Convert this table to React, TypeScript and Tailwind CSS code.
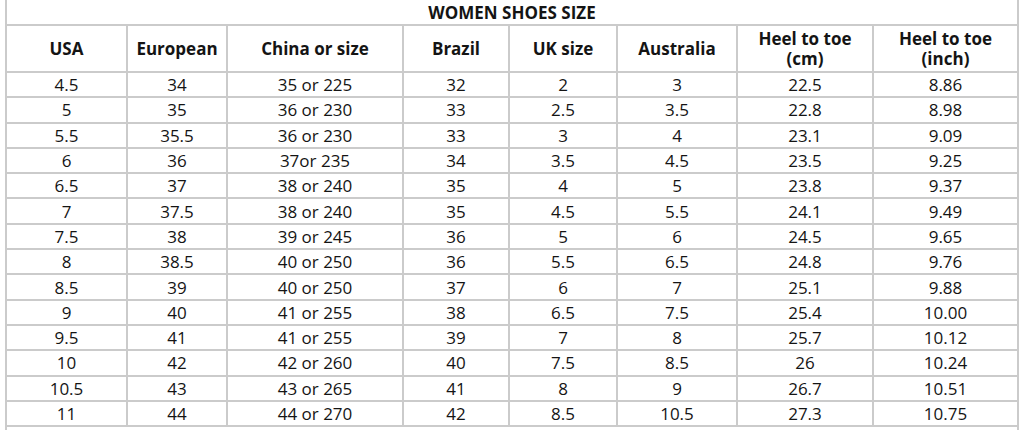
import React from "react";

const rows: string[][] = [
  ["4.5", "34", "35 or 225", "32", "2", "3", "22.5", "8.86"],
  ["5", "35", "36 or 230", "33", "2.5", "3.5", "22.8", "8.98"],
  ["5.5", "35.5", "36 or 230", "33", "3", "4", "23.1", "9.09"],
  ["6", "36", "37or 235", "34", "3.5", "4.5", "23.5", "9.25"],
  ["6.5", "37", "38 or 240", "35", "4", "5", "23.8", "9.37"],
  ["7", "37.5", "38 or 240", "35", "4.5", "5.5", "24.1", "9.49"],
  ["7.5", "38", "39 or 245", "36", "5", "6", "24.5", "9.65"],
  ["8", "38.5", "40 or 250", "36", "5.5", "6.5", "24.8", "9.76"],
  ["8.5", "39", "40 or 250", "37", "6", "7", "25.1", "9.88"],
  ["9", "40", "41 or 255", "38", "6.5", "7.5", "25.4", "10.00"],
  ["9.5", "41", "41 or 255", "39", "7", "8", "25.7", "10.12"],
  ["10", "42", "42 or 260", "40", "7.5", "8.5", "26", "10.24"],
  ["10.5", "43", "43 or 265", "41", "8", "9", "26.7", "10.51"],
  ["11", "44", "44 or 270", "42", "8.5", "10.5", "27.3", "10.75"],
];

const headers: React.ReactNode[] = [
  "USA",
  "European",
  "China or size",
  "Brazil",
  "UK size",
  "Australia",
  <>Heel to toe<br />(cm)</>,
  <>Heel to toe<br />(inch)</>,
];

const grid =
  "grid grid-cols-[121px_100px_176px_106px_108px_120px_136px_145px]";

export default function App() {
  return (
    <div
      className="w-[1024px] h-[430px] overflow-hidden bg-white text-[#141414]"
      style={{ fontFamily: '"Open Sans", "Noto Sans", sans-serif' }}
    >
      <div className="ml-[5px] w-[1014px] border-l-2 border-[#cbcbcb]">
        <div className="h-[26px] border-b-2 border-r-2 border-[#cbcbcb] flex items-center justify-center text-[17px] font-bold leading-none">
          WOMEN SHOES SIZE
        </div>
        <div className={`${grid} h-[47px] border-b-2 border-[#cbcbcb]`}>
          {headers.map((h, i) => (
            <div
              key={i}
              className="border-r-2 border-[#cbcbcb] flex items-center justify-center text-center text-[17px] font-bold leading-[20px]"
            >
              <span>{h}</span>
            </div>
          ))}
        </div>
        {rows.map((r, ri) => (
          <div key={ri} className={`${grid} h-[25.3px] border-b-2 border-[#cbcbcb]`}>
            {r.map((c, ci) => (
              <div
                key={ci}
                className="border-r-2 border-[#cbcbcb] flex items-center justify-center text-[17px] leading-none"
              >
                {c}
              </div>
            ))}
          </div>
        ))}
        <div className={`${grid} h-[25px]`}>
          {rows[0].map((_, ci) => (
            <div key={ci} className={ci === 7 ? "border-r-2 border-[#cbcbcb]" : ""} />
          ))}
        </div>
      </div>
    </div>
  );
}
